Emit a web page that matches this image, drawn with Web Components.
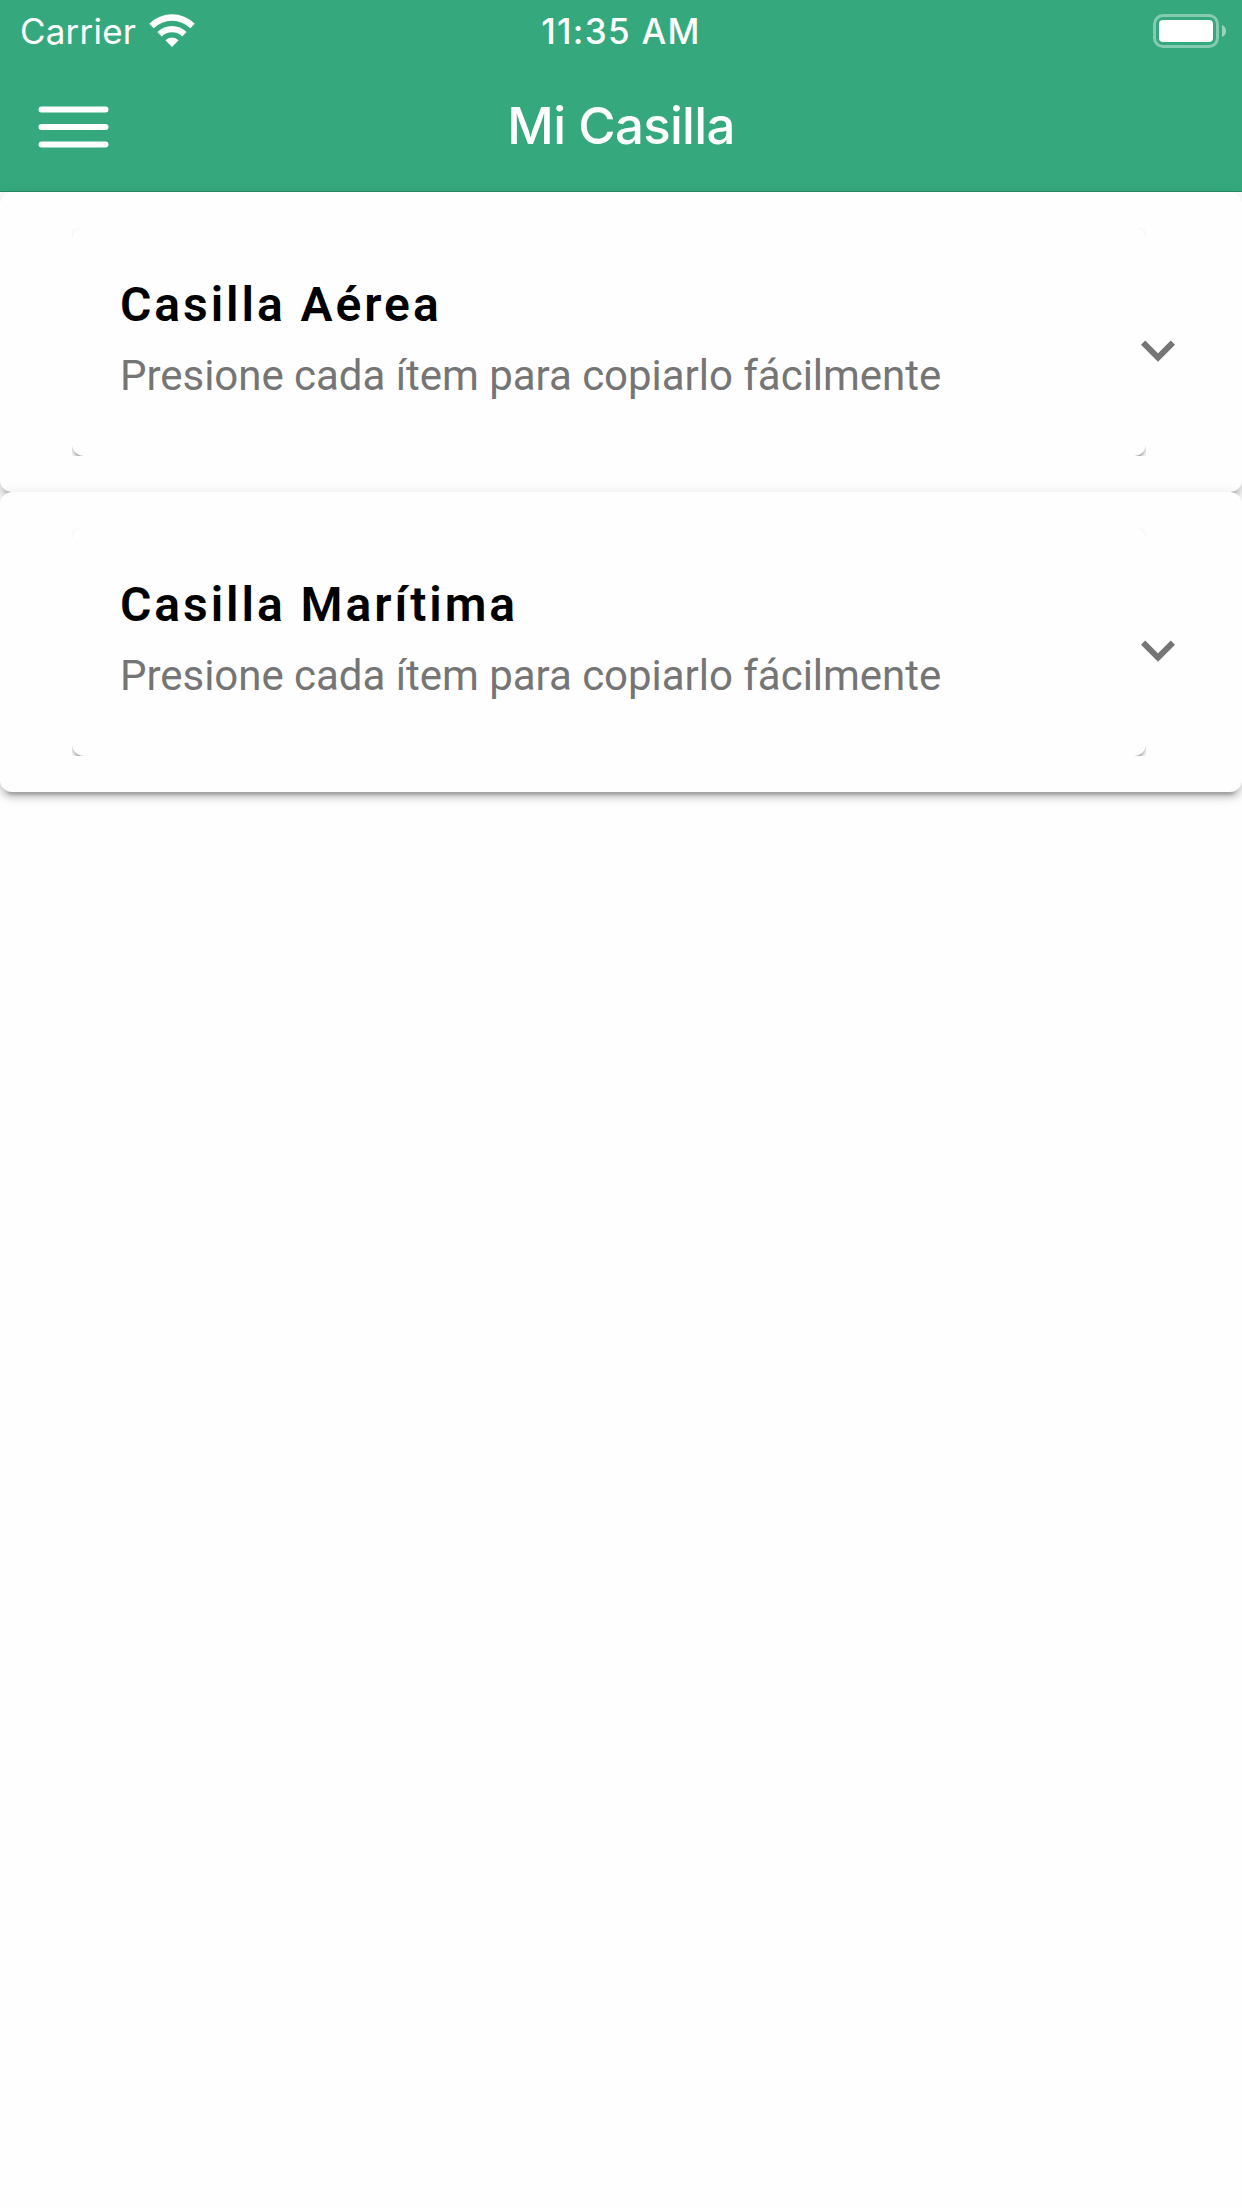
<!DOCTYPE html>
<html lang="es">
<head>
<meta charset="utf-8">
<title>Mi Casilla</title>
<style>
  body {
    margin: 0;
    min-height: 2208px;
    background: #fefefe;
    font-family: Roboto, "Liberation Sans", sans-serif;
  }
</style>
</head>
<body>
<casilla-header>
  <status-bar slot="status" carrier="Carrier" time="11:35 AM"></status-bar>
  Mi Casilla
</casilla-header>
<casilla-accordion>
  <casilla-panel>
    <span slot="title">Casilla Aérea</span>
    <span slot="subtitle">Presione cada ítem para copiarlo fácilmente</span>
  </casilla-panel>
  <casilla-panel>
    <span slot="title">Casilla Marítima</span>
    <span slot="subtitle">Presione cada ítem para copiarlo fácilmente</span>
  </casilla-panel>
</casilla-accordion>

<script>
// Carrier, clock and battery row
class StatusBar extends HTMLElement {
  constructor() {
    super();
    this.attachShadow({ mode: 'open' });
  }

  connectedCallback() {
    this.shadowRoot.innerHTML = `
      <style>
        :host {
          display: grid;
          grid-template-columns: 1fr auto 1fr;
          align-items: center;
          box-sizing: border-box;
          height: 60px;
          padding: 0 20px;
          font-family: Inter, "Liberation Sans", sans-serif;
          font-size: 35px;
          line-height: 62px;
          color: #fff;
        }

        .left {
          display: flex;
          align-items: center;
        }

        .carrier {
          width: 129px;
          font-weight: 400;
          letter-spacing: 0.2px;
          white-space: nowrap;
        }

        .time {
          font-weight: 550;
          letter-spacing: 1.3px;
        }

        .battery {
          justify-self: end;
          margin-right: -4px;
        }

        svg {
          display: block;
        }
      </style>
      <div class="left">
        <span class="carrier">${this.getAttribute('carrier')}</span>
        <svg width="46" height="34" viewBox="149 13 46 34" fill="#fff">
          <path d="M149.3 22.8A32 32 0 0 1 194.7 22.8L190.3 27.2A26 26 0 0 0 153.7 27.2Z"/>
          <path d="M157.4 31.1A20.5 20.5 0 0 1 186.6 31.1L182.2 35.5A14.5 14.5 0 0 0 161.8 35.5Z"/>
          <path d="M165.4 39.2A9.5 9.5 0 0 1 178.6 39.2L172 46Z"/>
        </svg>
      </div>
      <span class="time">${this.getAttribute('time')}</span>
      <svg class="battery" width="73" height="34" viewBox="0 0 73 34" fill="#fff">
        <rect x="1.5" y="1.5" width="63" height="31" rx="8.5" fill="none" stroke="#fff" stroke-width="3" opacity=".4"/>
        <rect x="6" y="6" width="54" height="22" rx="4"/>
        <path d="M69 11C71.500 12 73 14.300 73 17S71.500 22 69 23Z" opacity=".5"/>
      </svg>
    `;
  }
}

// Green toolbar with the menu button and the page title
class CasillaHeader extends HTMLElement {
  constructor() {
    super();
    this.attachShadow({ mode: 'open' });
    this.shadowRoot.innerHTML = `
      <style>
        :host {
          display: block;
          box-sizing: border-box;
          height: 192px;
          background: #35a97d;
          border-bottom: 1px solid #2b8b67;
        }

        .toolbar {
          display: grid;
          grid-template-columns: 1fr auto 1fr;
          align-items: center;
          height: 132px;
          padding: 0 38px;
          color: #fff;
        }

        svg {
          display: block;
          margin-top: 2px;
        }

        h1 {
          margin: 0;
          font: 550 51px/132px Inter, "Liberation Sans", sans-serif;
          letter-spacing: -0.7px;
        }
      </style>
      <slot name="status"></slot>
      <div class="toolbar">
        <svg width="71" height="42" viewBox="0 0 71 42" stroke="#fff" stroke-width="6" stroke-linecap="round">
          <path d="M3.500 3.500H67.500M3.500 21H67.500M3.500 38.500H67.500"/>
        </svg>
        <h1><slot></slot></h1>
      </div>
    `;
  }
}

class CasillaAccordion extends HTMLElement {
  constructor() {
    super();
    this.attachShadow({ mode: 'open' });
    this.shadowRoot.innerHTML = `
      <style>
        :host {
          display: flex;
          flex-direction: column;
        }
      </style>
      <slot></slot>
    `;
  }
}

// Collapsed expansion panel, the card shadow is clipped by its wrapper
class CasillaPanel extends HTMLElement {
  constructor() {
    super();
    this.attachShadow({ mode: 'open' });
    this.shadowRoot.innerHTML = `
      <style>
        :host {
          display: flex;
          align-items: center;
          box-sizing: border-box;
          height: 300px;
          padding: 0 67px 0 72px;
          background: #fefefe;
          border-radius: 12px;
          box-shadow: 0 9px 3px -6px rgba(0, 0, 0, 0.2),
                      0 6px 6px 0 rgba(0, 0, 0, 0.14),
                      0 3px 15px 0 rgba(0, 0, 0, 0.12);
        }

        .content {
          flex: none;
          width: 1074px;
          overflow: hidden;
        }

        .card {
          box-sizing: border-box;
          height: 228px;
          padding: 49px 48px 47px;
          border-radius: 12px;
          box-shadow: 0 6px 3px -3px rgba(0, 0, 0, 0.2),
                      0 3px 3px 0 rgba(0, 0, 0, 0.14),
                      0 3px 9px 0 rgba(0, 0, 0, 0.12);
        }

        .title {
          font-size: 48px;
          font-weight: 600;
          line-height: 56px;
          letter-spacing: 2.95px;
          color: #000;
        }

        .subtitle {
          margin-top: 18px;
          font-size: 42px;
          line-height: 49px;
          letter-spacing: -0.03px;
          color: #757575;
          white-space: nowrap;
        }

        .chevron {
          display: block;
          flex: none;
          margin: 18px 0 0 -5px;
        }
      </style>
      <div class="content">
        <div class="card">
          <div class="title"><slot name="title"></slot></div>
          <div class="subtitle"><slot name="subtitle"></slot></div>
        </div>
      </div>
      <svg class="chevron" width="34" height="22" viewBox="0 0 34 22" fill="none" stroke="#757575" stroke-width="6">
        <path d="M2.100 2.600L17 17.500L31.900 2.600"/>
      </svg>
    `;
  }
}

customElements.define('status-bar', StatusBar);
customElements.define('casilla-header', CasillaHeader);
customElements.define('casilla-accordion', CasillaAccordion);
customElements.define('casilla-panel', CasillaPanel);
</script>
</body>
</html>
